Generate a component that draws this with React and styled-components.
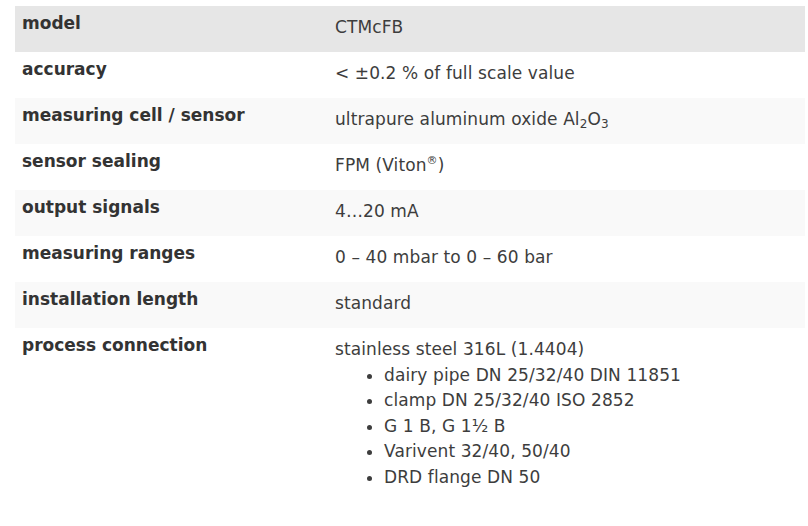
import React from 'react';
import styled, { createGlobalStyle } from 'styled-components';

const GlobalStyle = createGlobalStyle`
  html, body {
    margin: 0;
    padding: 0;
    background: #ffffff;
  }
  body {
    font-family: "DejaVu Sans", "Liberation Sans", sans-serif;
  }
`;

const Page = styled.div`
  padding: 6px 3px 0 15px;
`;

const Table = styled.div`
  width: 790px;
  display: flex;
  flex-direction: column;
`;

const Row = styled.div`
  display: grid;
  grid-template-columns: 313px 1fr;
  min-height: 46px;
  background: ${p => p.shade === 'dark' ? '#e6e6e6' : p.shade === 'light' ? '#f9f9f9' : '#ffffff'};
`;

const Label = styled.div`
  padding: 7px 7px 0;
  font-size: 17px;
  font-weight: 700;
  line-height: 20px;
  color: #333333;
`;

const Value = styled.div`
  padding: 9px 7px 8px;
  font-size: 17px;
  letter-spacing: 0.1px;
  line-height: 25.5px;
  color: #3d3d3d;

  sub {
    font-size: 12px;
    vertical-align: -3px;
    line-height: 0;
  }
  sup {
    font-size: 11px;
    vertical-align: 7px;
    line-height: 0;
  }
`;

const List = styled.ul`
  margin: 0;
  padding-left: 49px;
  list-style: disc;
`;

const rows = [
  { label: 'model', value: 'CTMcFB' },
  { label: 'accuracy', value: '< ±0.2 % of full scale value' },
  { label: 'measuring cell / sensor', value: <>ultrapure aluminum oxide Al<sub>2</sub>O<sub>3</sub></> },
  { label: 'sensor sealing', value: <>FPM (Viton<sup>®</sup>)</> },
  { label: 'output signals', value: '4…20 mA' },
  { label: 'measuring ranges', value: '0 – 40 mbar to 0 – 60 bar' },
  { label: 'installation length', value: 'standard' },
];

const connections = [
  'dairy pipe DN 25/32/40 DIN 11851',
  'clamp DN 25/32/40 ISO 2852',
  'G 1 B, G 1½ B',
  'Varivent 32/40, 50/40',
  'DRD flange DN 50',
];

export default function App() {
  return (
    <>
      <GlobalStyle />
      <Page>
        <Table>
          {rows.map((r, i) => (
            <Row key={r.label} shade={i === 0 ? 'dark' : i % 2 === 0 ? 'light' : 'white'}>
              <Label>{r.label}</Label>
              <Value>{r.value}</Value>
            </Row>
          ))}
          <Row shade="white">
            <Label>process connection</Label>
            <Value>
              stainless steel 316L (1.4404)
              <List>
                {connections.map(c => <li key={c}>{c}</li>)}
              </List>
            </Value>
          </Row>
        </Table>
      </Page>
    </>
  );
}
